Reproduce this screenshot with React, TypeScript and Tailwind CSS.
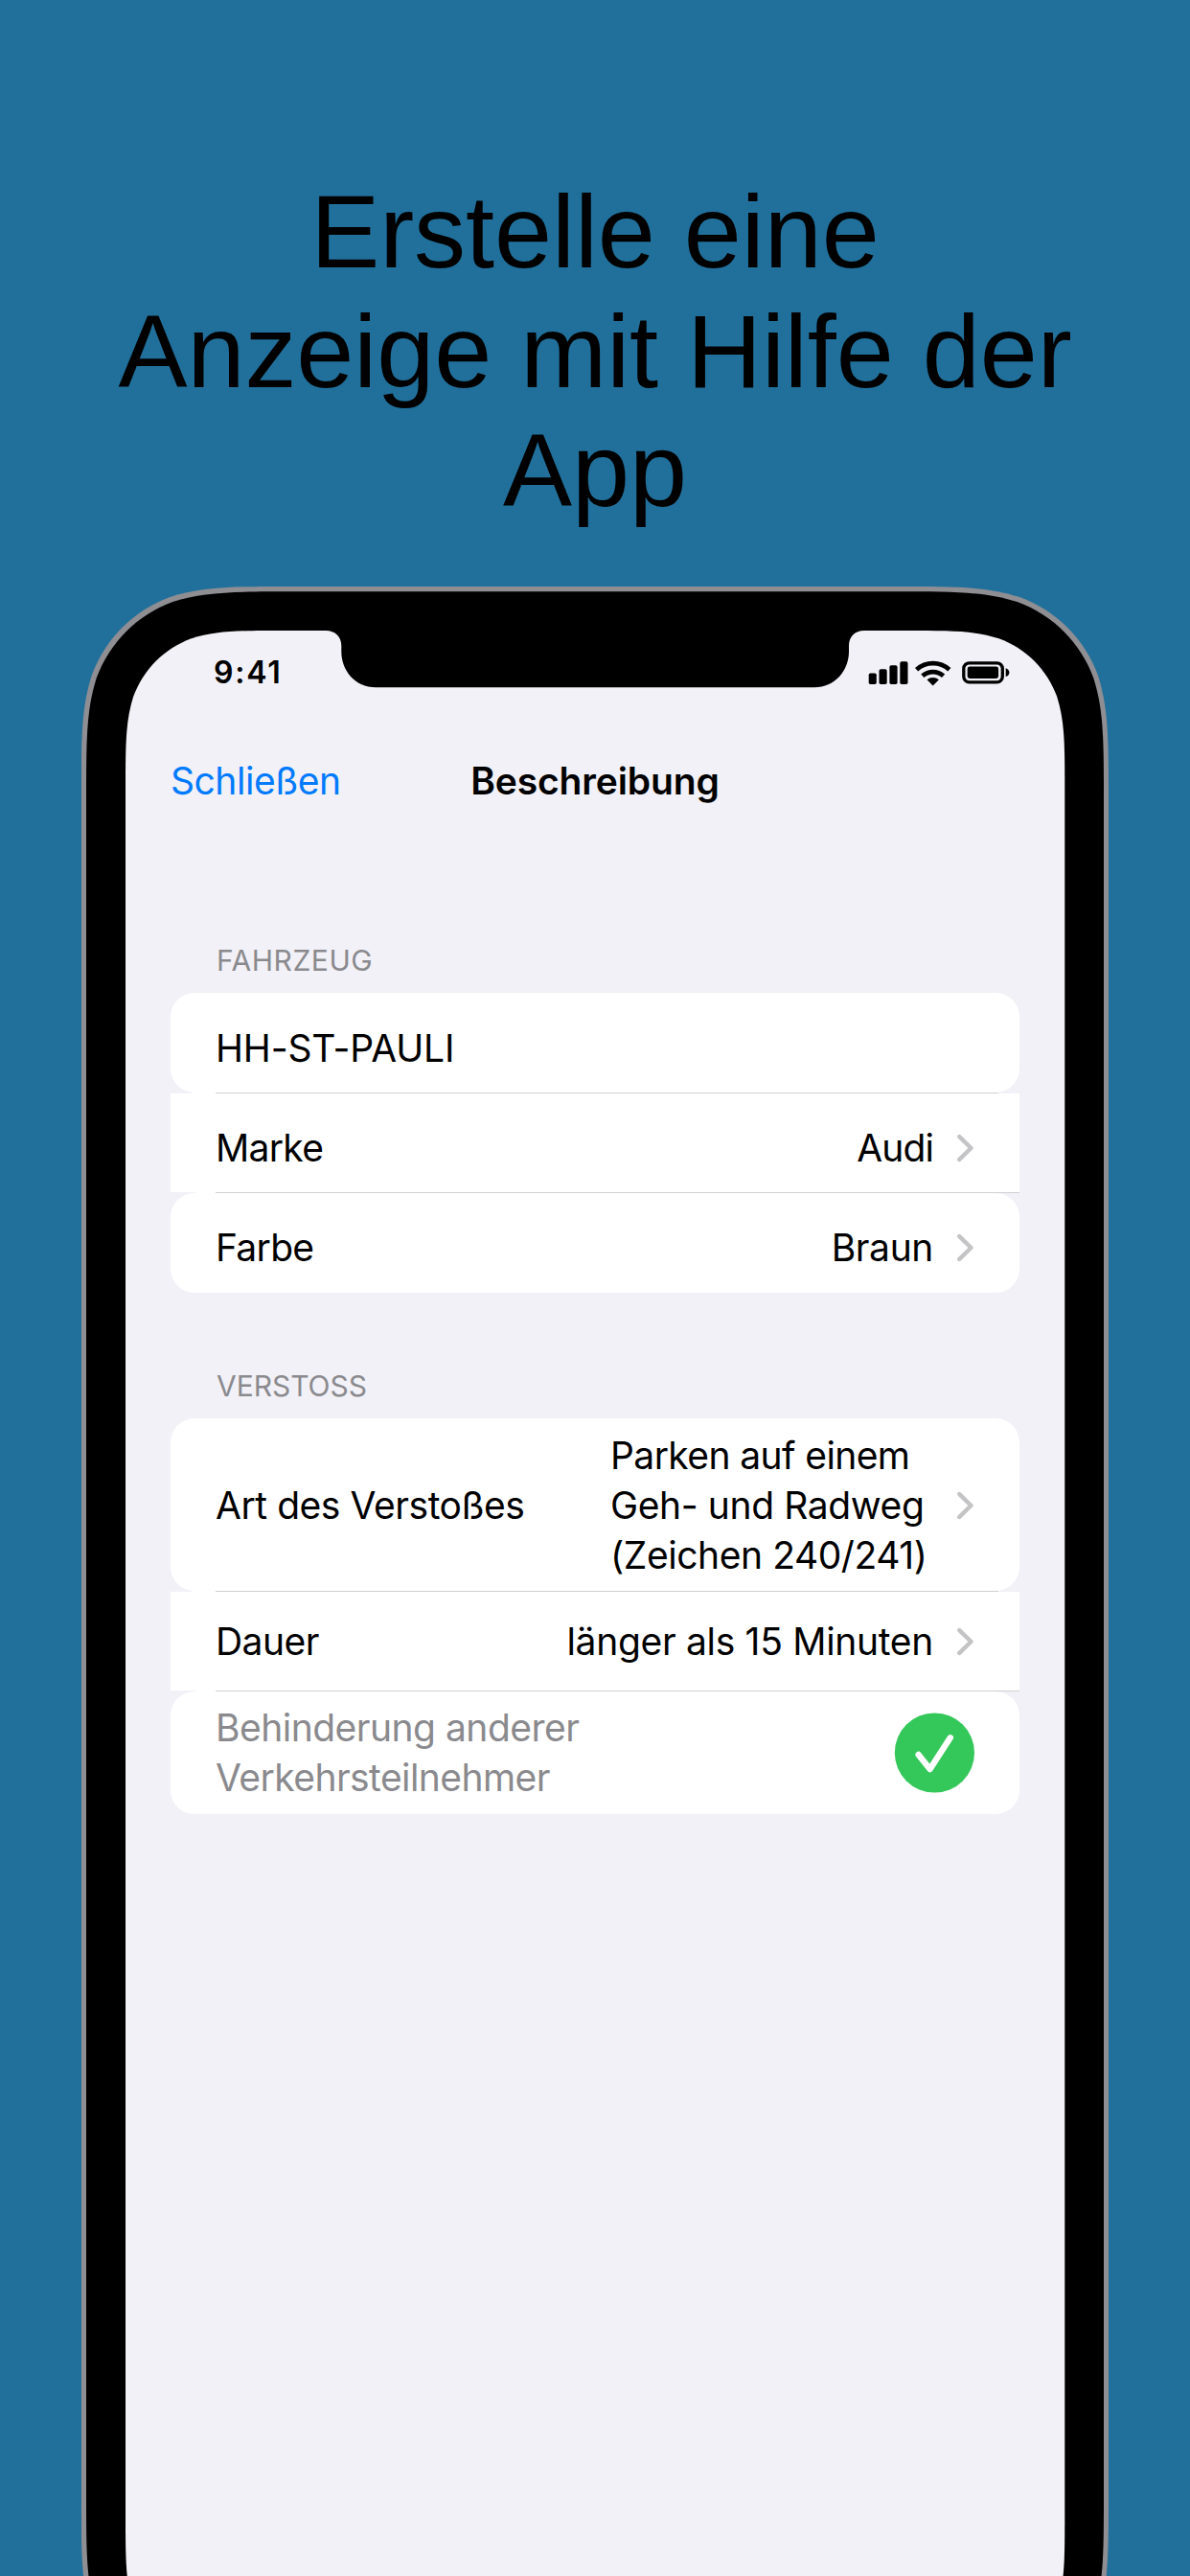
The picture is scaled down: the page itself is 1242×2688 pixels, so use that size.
import type { ReactNode } from "react";

/** Rounded rectangle with continuous-curvature corners. */
function squircle(x: number, y: number, w: number, h: number, r: number) {
  const a = 1.528665 * r;
  const b = 1.08849 * r;
  const c = 0.86841 * r;
  const d = 0.63149 * r;
  const e = 0.37282 * r;
  const f = 0.16906 * r;
  const g = 0.07491 * r;
  const R = x + w;
  const B = y + h;
  return [
    `M${x + a} ${y}H${R - a}`,
    `C${R - b} ${y} ${R - c} ${y} ${R - d} ${y + g}`,
    `C${R - e} ${y + f} ${R - f} ${y + e} ${R - g} ${y + d}`,
    `C${R} ${y + c} ${R} ${y + b} ${R} ${y + a}`,
    `V${B - a}`,
    `C${R} ${B - b} ${R} ${B - c} ${R - g} ${B - d}`,
    `C${R - f} ${B - e} ${R - e} ${B - f} ${R - d} ${B - g}`,
    `C${R - c} ${B} ${R - b} ${B} ${R - a} ${B}`,
    `H${x + a}`,
    `C${x + b} ${B} ${x + c} ${B} ${x + d} ${B - g}`,
    `C${x + e} ${B - f} ${x + f} ${B - e} ${x + g} ${B - d}`,
    `C${x} ${B - c} ${x} ${B - b} ${x} ${B - a}`,
    `V${y + a}`,
    `C${x} ${y + b} ${x} ${y + c} ${x + g} ${y + d}`,
    `C${x + f} ${y + e} ${x + e} ${y + f} ${x + d} ${y + g}`,
    `C${x + c} ${y} ${x + b} ${y} ${x + a} ${y}Z`,
  ].join("");
}

function DeviceBezel() {
  return (
    <svg className="absolute top-0 left-0 h-[2076px] w-[1072px]" viewBox="0 0 1072 2076" aria-hidden="true">
      <path d={squircle(-0.3, 0, 1072.3, 2212, 147)} fill="#8e8e93" />
      <path d={squircle(5, 5.3, 1062, 2201.4, 143)} fill="#000" />
      <path d={squircle(46, 46, 980.3, 2131, 109)} fill="#f2f1f7" />
      <path
        d="M255 45V46C265 46 271.3 52.500 271.3 62V68C271.300 88 286 105.300 307 105.300H765C786 105.300 801 88 801 68V62C801 52.500 807 46 817 46V45Z"
        fill="#000"
      />
    </svg>
  );
}

function StatusIcons() {
  return (
    <svg className="h-[28px] w-[148px]" viewBox="0 0 148 28" aria-hidden="true">
      <g fill="#000">
        <rect x="0.700" y="14.400" width="8.100" height="11.600" rx="1.800" />
        <rect x="11.500" y="10.200" width="8.200" height="15.800" rx="1.800" />
        <rect x="22.400" y="6.200" width="8.200" height="19.800" rx="1.800" />
        <rect x="33.300" y="2.300" width="8.200" height="23.700" rx="1.800" />
      </g>
      <g fill="none" stroke="#000" strokeWidth="4.800">
        <path d="M50.600 10.800A25.500 25.500 0 0 1 84.800 10.800" />
        <path d="M56.800 17.200A16.500 16.500 0 0 1 78.600 17.200" />
      </g>
      <path d="M61.500 21.300A9.300 9.300 0 0 1 73.900 21.300L67.700 27.600Z" fill="#000" />
      <rect x="99.800" y="3.800" width="40.500" height="20" rx="5.800" fill="none" stroke="#000" strokeWidth="3.300" />
      <rect x="103.700" y="7.600" width="32.400" height="12.400" rx="2.400" fill="#000" />
      <path d="M143.700 9.300C146 10 147.400 11.700 147.400 13.700S146 17.400 143.700 18.100Z" fill="#000" />
    </svg>
  );
}

function Chevron() {
  return (
    <svg className="h-[30px] w-[19px] shrink-0" viewBox="0 0 19 30" fill="none" aria-hidden="true">
      <path d="M3.300 3.100L15.500 15L3.300 26.900" stroke="#c4c4c6" strokeWidth="4.400" strokeLinecap="round" strokeLinejoin="round" />
    </svg>
  );
}

function CheckBadge() {
  return (
    <svg className="h-[84px] w-[84px] shrink-0" viewBox="0 0 84 84" fill="none" aria-hidden="true">
      <circle cx="42.400" cy="42" r="41.600" fill="#34c759" />
      <path d="M25.600 44L37.600 59.100L58.800 26.300" stroke="#fff" strokeWidth="6.400" strokeLinecap="round" strokeLinejoin="round" />
    </svg>
  );
}

function SectionLabel({ children, className }: { children: string; className: string }) {
  return <h2 className={`pl-[48px] text-[30px] leading-[40px] text-[#8a8a8e] ${className}`}>{children}</h2>;
}

function Row({ children, className }: { children: ReactNode; className: string }) {
  return (
    <div className={`flex items-center justify-between bg-white pl-[47px] ${className}`}>{children}</div>
  );
}

function Separator({ full = false }: { full?: boolean }) {
  return (
    <div className={`h-px bg-white ${full ? "ml-[26px]" : "mx-[22px]"}`}>
      <div className={`h-px bg-[#d0d0d3] ${full ? "ml-[21px]" : "ml-[25px]"}`} />
    </div>
  );
}

function Value({ children }: { children: ReactNode }) {
  return (
    <div className="flex items-center gap-[24px] pr-[47px]">
      {children}
      <Chevron />
    </div>
  );
}

export default function App() {
  return (
    <main className="h-[2688px] w-[1242px] overflow-hidden bg-[#21709c] text-black">
      <h1 className="h-[612px] pt-[180px] text-center font-['Liberation_Sans',Arial,sans-serif] text-[108px] leading-[124.500px] tracking-[-0.060px]">
        <span className="block">Erstelle eine</span>
        <span className="block">Anzeige mit Hilfe der</span>
        <span className="block">App</span>
      </h1>

      <section className="relative mx-auto h-[2076px] w-[1072px] font-[Inter,sans-serif]">
        <DeviceBezel />
        <div className="relative px-[46px] pt-[46px]">
          <div className="flex h-[96px] items-start justify-between pt-[24px] pr-[57px] pl-[92px]">
            <span className="text-[32px] leading-[40px] font-semibold tracking-[1.780px]">9:41</span>
            <div className="pt-[6px]">
              <StatusIcons />
            </div>
          </div>

          <header className="grid h-[228px] grid-cols-3 items-start px-[47px] pt-[35px] text-[39px] leading-[52px]">
            <button type="button" className="text-left tracking-[-0.470px] text-[#007aff]">
              Schließen
            </button>
            <span className="text-center font-semibold tracking-[-0.130px]">Beschreibung</span>
          </header>

          <div className="px-[47px] text-[39px] leading-[52px] whitespace-nowrap">
            <SectionLabel className="tracking-[0.540px]">FAHRZEUG</SectionLabel>
            <div className="mt-[14px]">
              <Row className="h-[104px] rounded-[25px] pt-[11px]">
                <span className="tracking-[-0.140px]">HH-ST-PAULI</span>
              </Row>
              <Separator />
              <Row className="h-[103px] pt-[10px]">
                <span className="tracking-[-0.700px]">Marke</span>
                <Value>
                  <span className="tracking-[-0.900px]">Audi</span>
                </Value>
              </Row>
              <Separator full />
              <Row className="h-[104px] rounded-[25px] pt-[10px]">
                <span className="tracking-[-0.700px]">Farbe</span>
                <Value>
                  <span className="tracking-[-0.370px]">Braun</span>
                </Value>
              </Row>
            </div>

            <SectionLabel className="mt-[77px] tracking-[-0.030px]">VERSTOSS</SectionLabel>
            <div className="mt-[14px]">
              <Row className="h-[180px] rounded-[25px] pt-px">
                <span className="tracking-[-0.450px]">Art des Verstoßes</span>
                <Value>
                  <span className="w-[337px]">
                    <span className="block tracking-[-0.590px]">Parken auf einem</span>
                    <span className="block tracking-[-0.390px]">Geh- und Radweg</span>
                    <span className="block tracking-[-0.430px]">(Zeichen 240/241)</span>
                  </span>
                </Value>
              </Row>
              <Separator />
              <Row className="h-[103px]">
                <span className="tracking-[-0.540px]">Dauer</span>
                <Value>
                  <span className="tracking-[-0.310px]">länger als 15 Minuten</span>
                </Value>
              </Row>
              <Separator full />
              <Row className="h-[128px] rounded-[25px] pr-[47px]">
                <span className="text-[#8a8a8e]">
                  <span className="block tracking-[-0.510px]">Behinderung anderer</span>
                  <span className="block tracking-[-0.560px]">Verkehrsteilnehmer</span>
                </span>
                <CheckBadge />
              </Row>
            </div>
          </div>
        </div>
      </section>
    </main>
  );
}
